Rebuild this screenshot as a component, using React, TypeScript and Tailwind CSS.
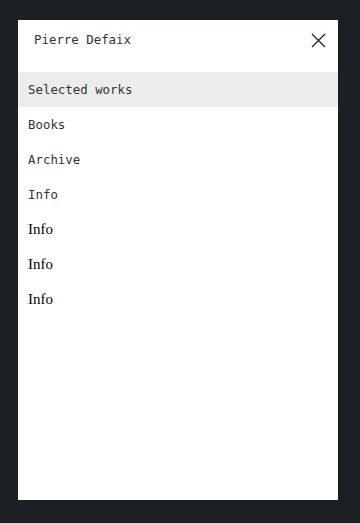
const MONO_ITEMS = ["Selected works", "Books", "Archive", "Info"];
const SERIF_ITEMS = ["Info", "Info", "Info"];

export default function App() {
  return (
    <div className="w-[360px] h-[523px] bg-[#1c1f24] pt-[20px] pl-[18px]">
      <div className="w-[320px] h-[480px] bg-white flex flex-col">
        <div className="h-[52px] pt-[10px] pl-[16px] pr-[12px]">
          <div className="h-[20px] flex items-center justify-between">
            <span className="font-['DejaVu_Sans_Mono',monospace] text-[12.4px] text-[#333]">Pierre Defaix</span>
            <button className="w-[16px] h-[16px] flex items-center justify-center">
              <svg width="15" height="15" viewBox="0 0 15 15">
                <path d="M1 1 L14 14 M14 1 L1 14" stroke="#222" strokeWidth="1.3" fill="none" />
              </svg>
            </button>
          </div>
        </div>
        <ul className="flex flex-col">
          {MONO_ITEMS.map((item, i) => (
            <li
              key={i}
              className={`h-[35px] flex items-center pl-[10px] pt-[1px] font-['DejaVu_Sans_Mono',monospace] text-[12.4px] text-[#333] ${i === 0 ? "bg-[#ececec]" : ""}`}
            >
              {item}
            </li>
          ))}
          {SERIF_ITEMS.map((item, i) => (
            <li key={"s" + i} className="h-[35px] flex items-center pl-[10px] font-['Liberation_Serif',serif] text-[15px] text-black">
              {item}
            </li>
          ))}
        </ul>
      </div>
    </div>
  );
}
